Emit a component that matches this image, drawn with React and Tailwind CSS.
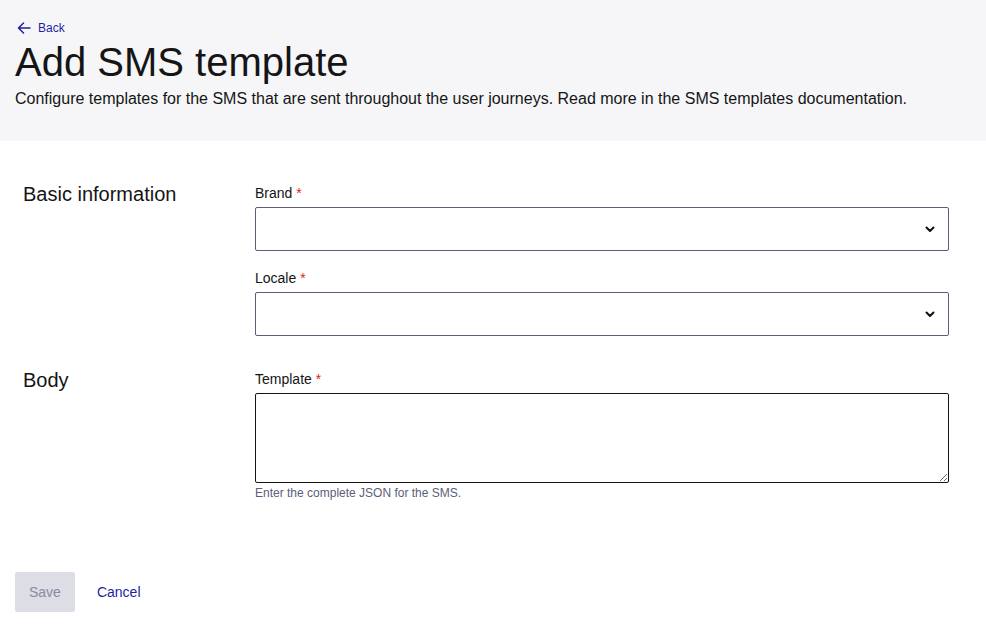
import React from "react";

function Chevron() {
  return (
    <svg width="12" height="8" viewBox="0 0 12 8" fill="none">
      <path d="M2.5 2.5l3.5 3.5 3.5-3.5" stroke="#111" strokeWidth="2" strokeLinecap="round" strokeLinejoin="round" />
    </svg>
  );
}

function Arrow() {
  return (
    <svg width="14" height="12" viewBox="0 0 14 12" fill="none">
      <path d="M13 6H1.5M6.5 1L1.5 6l5 5" stroke="#1f1fa3" strokeWidth="1.5" strokeLinecap="round" strokeLinejoin="round" />
    </svg>
  );
}

function Label({ children }) {
  return (
    <div className="text-[14px] leading-[22px] text-[#151515] mb-[3px]">
      {children} <span className="text-[#e0241b]">*</span>
    </div>
  );
}

function Select() {
  return (
    <div className="h-[44px] w-full border border-[#5e5e7a] rounded-[2px] bg-white flex items-center justify-end pr-[12px]">
      <Chevron />
    </div>
  );
}

export default function App() {
  return (
    <div className="min-h-[626px] bg-white text-[#151515]" style={{ fontFamily: '"Liberation Sans", Arial, sans-serif' }}>
      <div className="bg-[#f6f6f8] pl-[15px] pt-[19px] pb-[30px]">
        <a className="flex items-center h-[18px] text-[12px] text-[#1f1fa3] gap-[7px] pl-[2px]">
          <Arrow />
          <span>Back</span>
        </a>
        <h1 className="text-[40px] leading-[48px] mt-[1px] text-[#151515]">Add SMS template</h1>
        <p className="text-[16px] leading-[24px] mt-[1px]">
          Configure templates for the SMS that are sent throughout the user journeys. Read more in the SMS templates documentation.
        </p>
      </div>
      <div className="pl-[23px] pr-[37px] pt-[41px]">
        <div className="flex items-start">
          <h2 className="w-[232px] shrink-0 text-[20px] leading-[21px] mt-[2px]">Basic information</h2>
          <div className="flex-1">
            <Label>Brand</Label>
            <Select />
            <div className="mt-[16px]">
              <Label>Locale</Label>
              <Select />
            </div>
          </div>
        </div>
        <div className="flex items-start mt-[32px]">
          <h2 className="w-[232px] shrink-0 text-[20px] leading-[21px] mt-[2px]">Body</h2>
          <div className="flex-1">
            <Label>Template</Label>
            <textarea className="block w-full h-[90px] border border-[#151515] rounded-[2px] bg-white outline-none" />
            <div className="text-[12px] leading-[16px] text-[#5d5d7b] mt-[2px]">Enter the complete JSON for the SMS.</div>
          </div>
        </div>
      </div>
      <div className="pl-[15px] mt-[71px] flex items-center gap-[22px]">
        <button className="h-[40px] px-[14px] bg-[#dddde5] text-[#8a8aa3] text-[14px] rounded-[2px]">Save</button>
        <a className="text-[14px] text-[#1f1fa3]">Cancel</a>
      </div>
    </div>
  );
}
